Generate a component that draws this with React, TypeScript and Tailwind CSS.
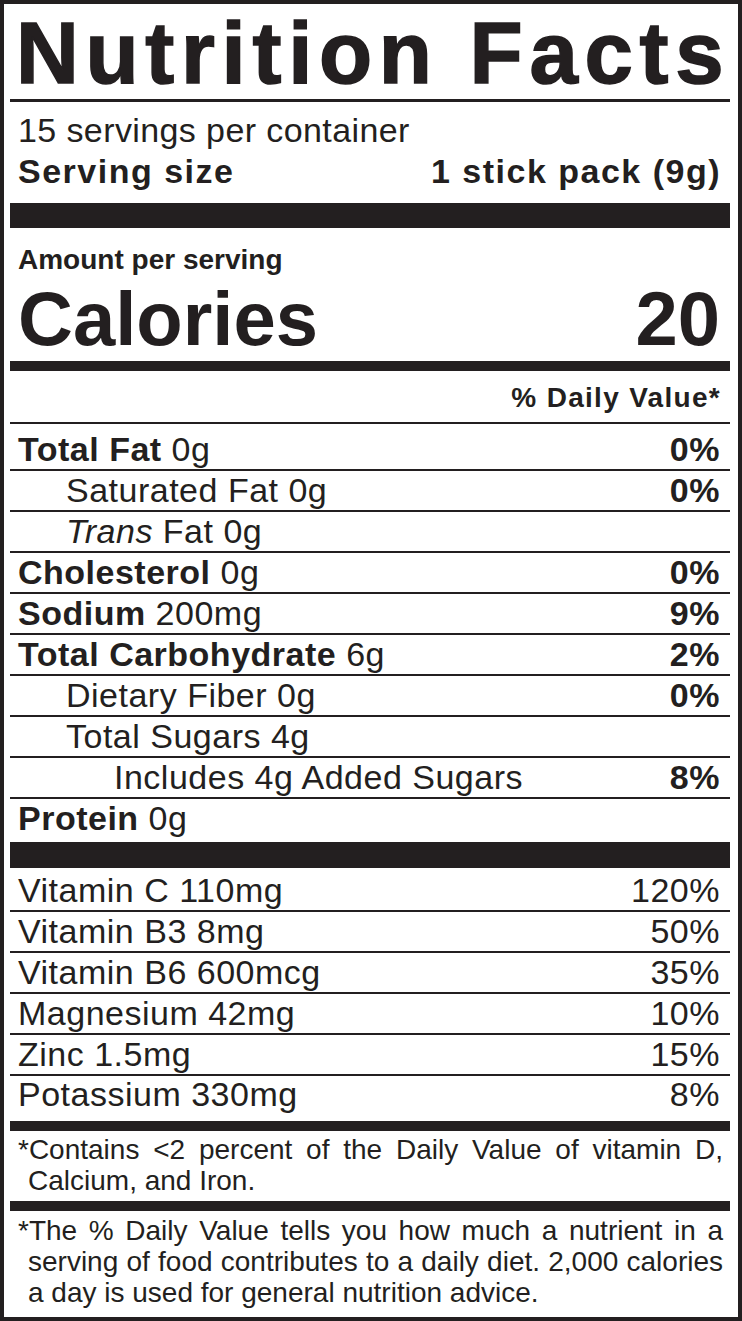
import React from "react";

type Nutrient = {
    bold?: string;
    text: React.ReactNode;
    dv?: string;
    indent?: string;
    h: string;
};

const nutrients: Nutrient[] = [
    { bold: "Total Fat", text: " 0g", dv: "0%", h: "h-[47px]" },
    { text: "Saturated Fat 0g", dv: "0%", indent: "pl-[48px]", h: "h-[41px]" },
    {
        text: (
            <>
                <i>Trans</i> Fat 0g
            </>
        ),
        indent: "pl-[48px]",
        h: "h-[41px]",
    },
    { bold: "Cholesterol", text: " 0g", dv: "0%", h: "h-[41px]" },
    { bold: "Sodium", text: " 200mg", dv: "9%", h: "h-[41px]" },
    { bold: "Total Carbohydrate", text: " 6g", dv: "2%", h: "h-[41px]" },
    { text: "Dietary Fiber 0g", dv: "0%", indent: "pl-[48px]", h: "h-[41px]" },
    { text: "Total Sugars 4g", indent: "pl-[48px]", h: "h-[41px]" },
    { text: "Includes 4g Added Sugars", dv: "8%", indent: "pl-[96px]", h: "h-[41px]" },
];

const vitamins = [
    { text: "Vitamin C 110mg", dv: "120%", h: "h-[44px]" },
    { text: "Vitamin B3 8mg", dv: "50%", h: "h-[41px]" },
    { text: "Vitamin B6 600mcg", dv: "35%", h: "h-[41px]" },
    { text: "Magnesium 42mg", dv: "10%", h: "h-[41px]" },
    { text: "Zinc 1.5mg", dv: "15%", h: "h-[41px]" },
];

const Bar = ({ h }: { h: string }) => <div className={`${h} w-full bg-[#231f20]`} />;

const App = () => {
    return (
        <div className="h-[1321px] w-[742px] bg-white border-4 border-[#231f20] pl-[6px] pr-[8px] flex flex-col text-[#231f20] font-['Liberation_Sans',Arial,sans-serif]">
            <h1 className="pt-[3px] pl-[6px] text-[87px] leading-[92px] font-bold tracking-[6.7px] whitespace-nowrap [-webkit-text-stroke:1.5px_#231f20]">Nutrition Facts</h1>
            <Bar h="h-[3px]" />

            <div className="px-[8px] pt-[8px] text-[34px] leading-[40px] tracking-[0.4px]">15 servings per container</div>
            <div className="pl-[8px] pr-[9px] pb-[11px] flex justify-between text-[34px] leading-[42px] font-bold tracking-[1.5px]">
                <span>Serving size</span>
                <span>1 stick pack (9g)</span>
            </div>
            <Bar h="h-[25px]" />

            <div className="px-[8px] pt-[16px] text-[28px] leading-[32px] font-bold">Amount per serving</div>
            <div className="pl-[8px] pr-[10px] flex justify-between text-[76px] leading-[85px] font-bold">
                <span>Calories</span>
                <span>20</span>
            </div>
            <Bar h="h-[10px]" />

            <div className="pl-[8px] pr-[9px] pt-[2px] text-right text-[28px] leading-[49px] font-bold tracking-[1.3px] border-b-2 border-[#231f20]">% Daily Value*</div>

            {nutrients.map((n, i) => (
                <div key={i} className={`${n.h} pl-[8px] pr-[10px] pb-[1px] flex items-end justify-between text-[34px] leading-[38px] tracking-[0.5px] border-b-2 border-[#231f20]`}>
                    <span className={n.indent}>
                        {n.bold && <b>{n.bold}</b>}
                        {n.text}
                    </span>
                    {n.dv && <b>{n.dv}</b>}
                </div>
            ))}
            <div className="h-[43px] px-[8px] pb-[5px] flex items-end text-[34px] leading-[38px] tracking-[0.5px]">
                <span>
                    <b>Protein</b> 0g
                </span>
            </div>
            <Bar h="h-[26px]" />

            {vitamins.map((v) => (
                <div key={v.text} className={`${v.h} pl-[8px] pr-[10px] pb-[1px] flex items-end justify-between text-[34px] leading-[38px] tracking-[0.5px] border-b-2 border-[#231f20]`}>
                    <span>{v.text}</span>
                    <span>{v.dv}</span>
                </div>
            ))}
            <div className="h-[45px] pl-[8px] pr-[10px] pb-[8px] flex items-end justify-between text-[34px] leading-[38px] tracking-[0.5px]">
                <span>Potassium 330mg</span>
                <span>8%</span>
            </div>
            <Bar h="h-[10px]" />

            <p className="pt-[3px] pb-[5px] pl-[8px] pr-[7px] text-[28px] leading-[31px] text-justify">
                <span className="block pl-[10px] -indent-[10px]">*Contains &lt;2 percent of the Daily Value of vitamin D, Calcium, and Iron.</span>
            </p>
            <Bar h="h-[10px]" />

            <p className="flex-1 pt-[4px] pl-[8px] pr-[7px] text-[28px] leading-[31px] text-justify">
                <span className="block pl-[10px] -indent-[10px]">*The % Daily Value tells you how much a nutrient in a serving of food contributes to a daily diet. 2,000 calories a day is used for general nutrition advice.</span>
            </p>
        </div>
    );
};

export default App;
